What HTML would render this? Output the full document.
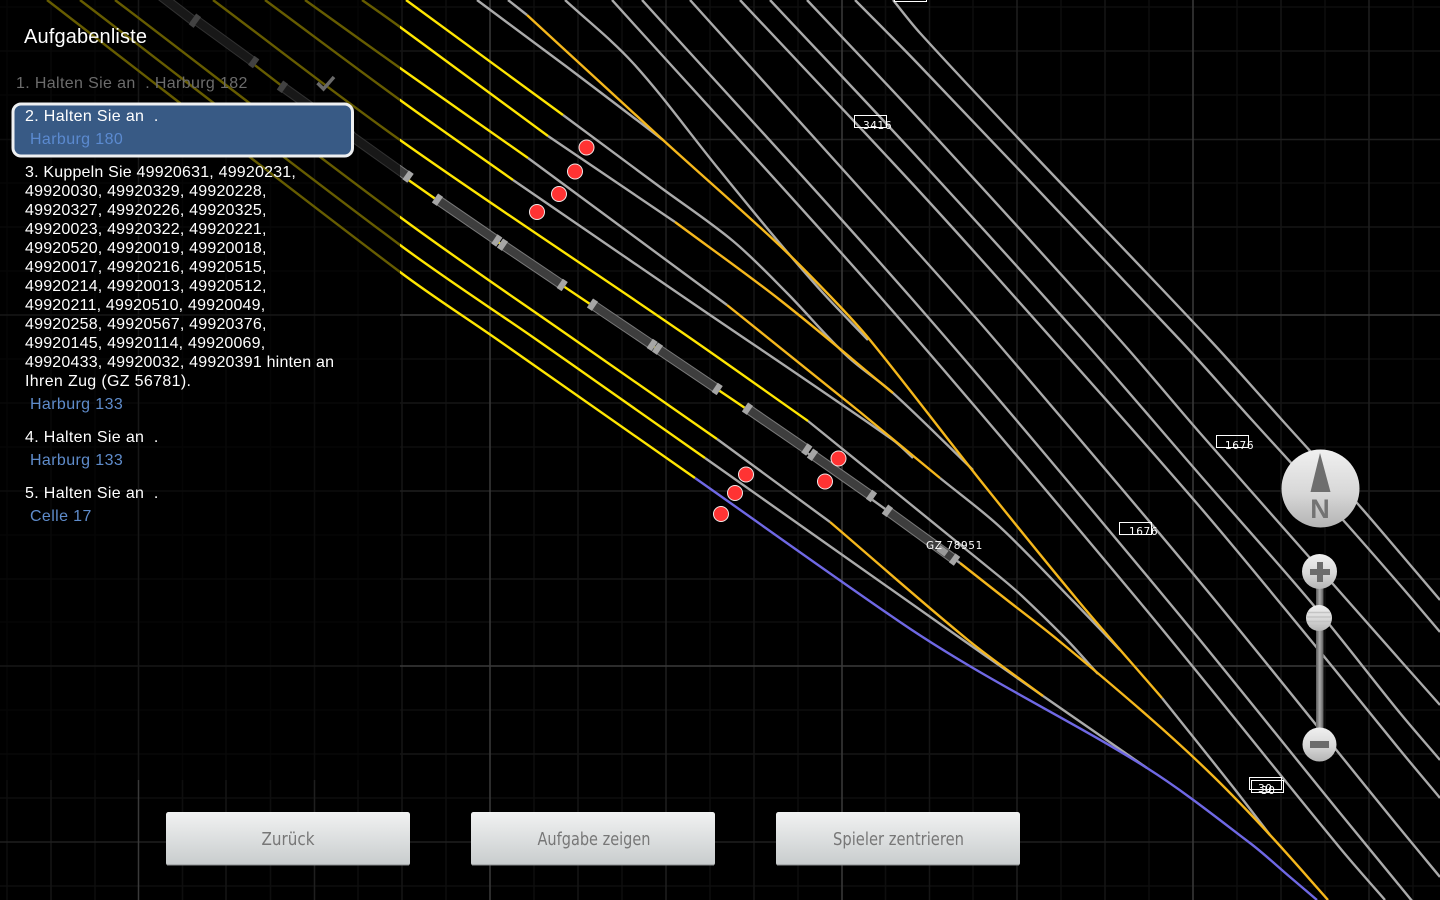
<!DOCTYPE html>
<html lang="de"><head><meta charset="utf-8"><title>Aufgabenliste</title>
<style>
html,body{margin:0;padding:0;background:#000;width:1440px;height:900px;overflow:hidden}
svg{display:block;position:absolute;left:0;top:0}
text{white-space:pre}
.l{font:16px "Liberation Sans",sans-serif;letter-spacing:.2px;fill:#fff}
.h{letter-spacing:.34px}
.b{font:16px "Liberation Sans",sans-serif;letter-spacing:.38px;fill:#5f8ccb}
.m{font:10.5px "DejaVu Sans",sans-serif;letter-spacing:.6px;fill:#fff}
.btn{font:18px "DejaVu Sans","Liberation Sans",sans-serif;fill:#777;text-anchor:middle}
polyline{fill:none;stroke-width:2.4;stroke-linejoin:round}
.g polyline{stroke:#aaa}.y polyline{stroke:#ffe600}.o polyline{stroke:#f5b71c}
</style></head><body>
<svg width="1440" height="900" viewBox="0 0 1440 900" xmlns="http://www.w3.org/2000/svg">
<defs>
<linearGradient id="bt" x1="0" y1="0" x2="0" y2="1"><stop offset="0" stop-color="#f1f2f2"/><stop offset="1" stop-color="#c8cccd"/></linearGradient>
<linearGradient id="cp" x1="0" y1="0" x2="0" y2="1"><stop offset="0" stop-color="#f0f0f0"/><stop offset=".55" stop-color="#d8d8d8"/><stop offset="1" stop-color="#b4b4b4"/></linearGradient>
<linearGradient id="tr" x1="0" y1="0" x2="1" y2="0"><stop offset="0" stop-color="#5a5a5a"/><stop offset=".5" stop-color="#aaa"/><stop offset="1" stop-color="#5a5a5a"/></linearGradient>
<g id="car"><line x1="0" y1="0" x2="78" y2="0" stroke="#7a7a7a" stroke-width="10"/><line x1="0" y1="0" x2="78" y2="0" stroke="#3e3e3e" stroke-width="8"/><rect x="0" y="-5.500" width="6" height="11" fill="#a6a6a6"/><rect x="72" y="-5.500" width="6" height="11" fill="#a6a6a6"/></g>
<g id="car2"><line x1="0" y1="0" x2="89" y2="0" stroke="#7a7a7a" stroke-width="10"/><line x1="0" y1="0" x2="89" y2="0" stroke="#3e3e3e" stroke-width="8"/><rect x="0" y="-5.500" width="6" height="11" fill="#a6a6a6"/><rect x="83" y="-5.500" width="6" height="11" fill="#a6a6a6"/><rect x="66" y="-3.500" width="10" height="7" fill="#999"/></g>
</defs>
<rect width="1440" height="900" fill="#000"/>
<g id="grid" fill="none" stroke-width="1.500">
<g stroke="#0e0e0e">
<path d="M7 0V900M95 0V900M182.500 0V900M270.500 0V900M358 0V900M446 0V900M534 0V900M622 0V900M710 0V900M798 0V900M885.500 0V900M973 0V900M1061 0V900M1149 0V900M1237 0V900M1325 0V900M1413 0V900"/>
<path d="M0 7H1440M0 95H1440M0 183H1440M0 271H1440M0 359H1440M0 447H1440M0 535H1440M0 622H1440M0 710H1440M0 798H1440M0 886H1440"/>
</g>
<g stroke="#151515">
<path d="M51 0V900M226 0V900M402 0V900M578 0V900M754 0V900M929.500 0V900M1105 0V900M1281 0V900"/>
<path d="M0 51H1440M0 227H1440M0 403H1440M0 579H1440M0 754H1440"/>
</g>
<g stroke="#1f1f1f">
<path d="M314.500 0V900M666 0V900M1017 0V900M1369 0V900"/>
<path d="M0 139.500H1440M0 491H1440M0 842H1440"/>
</g>
<g stroke="#3a3a3a">
<path d="M138.500 0V900M490 0V900M842 0V900M1193 0V900"/>
<path d="M0 315H1440M0 666H1440"/>
</g>
</g>
<g class="g">
<polyline points="893,0 920,33 1017,137 1210,340 1282,420 1357,503 1400,553 1440,600"/>
<polyline points="855,0 920,66 1180,340 1252,420 1343,520 1400,585 1440,632"/>
<polyline points="807,0 920,120 1120,340 1200,433 1310,558 1400,660 1440,705"/>
<polyline points="770,0 920,160 1083,340 1200,475 1315,607 1400,713 1440,760"/>
<polyline points="740,0 920,192 1053,340 1200,507 1313,643 1400,750 1440,798"/>
<polyline points="690,0 920,255 995,340 1200,582 1393,820 1440,877"/>
<polyline points="642,0 913,300 1167,600 1340,813 1440,935"/>
<polyline points="612,0 883,300 1138,600 1340,848 1385,900"/>
<polyline points="565,0 633,63 717,167 777,240 823,293 868,340"/>
<polyline points="477,0 567,67 663,140"/>
<polyline points="508,0 527,15"/>
<polyline points="1162,698 1233,787 1270,835"/>
<polyline points="563,115 660,187 733,241 787,293 847,356 893,393 973,470"/>
<polyline points="548,136 675,222"/>
<polyline points="528,158 727,305"/>
<polyline points="940,478 1000,527 1072,600 1120,650"/>
<polyline points="513,180 688,300 893,440 913,458"/>
<polyline points="808,421 1000,577 1022,596 1067,640 1098,674"/>
<polyline points="745,408 960,563"/>
<polyline points="705,458 963,640 1043,696"/>
<polyline points="717,439 830,522"/>
<polyline points="1043,696 1147,768"/>
</g>
<g class="y">
<polyline points="406,0 563,115"/>
<polyline points="362,0 400,27 548,136"/>
<polyline points="305,0 400,68 528,158"/>
<polyline points="265,0 400,100 513,180"/>
<polyline points="213,0 400,140 680,331 808,421"/>
<polyline points="170,0 400,174 745,408"/>
<polyline points="115,0 400,217 575,340 717,439"/>
<polyline points="80,0 400,245 537,340 705,458"/>
<polyline points="47,0 400,272 498,340 695,478"/>
</g>
<g class="o">
<polyline points="527,15 663,140 777,243 830,296 870,340 980,480 1080,603 1162,698"/>
<polyline points="675,222 780,300 893,393"/>
<polyline points="727,305 860,412 940,478"/>
<polyline points="830,522 968,640 1043,696"/>
<polyline points="960,563 1007,600 1058,640 1150,718 1213,776 1270,835 1328,900"/>
</g>
<polyline points="695,478 900,622 973,668 1147,768 1250,843 1290,877 1317,900" stroke="#6f68e4"/>
<g id="trains">
<use href="#car" transform="translate(135,-24) rotate(37.500)"/>
<use href="#car" transform="translate(193,18) rotate(36)"/>
<use href="#car" transform="translate(280,85) rotate(35.500)"/>
<use href="#car" transform="translate(347,133) rotate(35.500)"/>
<use href="#car" transform="translate(435,198) rotate(34.500)"/>
<use href="#car" transform="translate(500,243) rotate(34)"/>
<use href="#car" transform="translate(590,303) rotate(34)"/>
<use href="#car" transform="translate(655,347) rotate(34)"/>
<use href="#car" transform="translate(745,407) rotate(34.500)"/>
<use href="#car" transform="translate(810,453) rotate(35)"/>
<use href="#car2" transform="translate(885,509) rotate(36)"/>
</g>
<rect x="0" y="0" width="400" height="780" fill="#000" fill-opacity=".6"/>
<g fill="#f33" stroke="#f4e8e8" stroke-width="1">
<circle cx="586.500" cy="147.500" r="7.500"/><circle cx="575" cy="171.500" r="7.500"/><circle cx="559" cy="194" r="7.500"/><circle cx="537" cy="212" r="7.500"/>
<circle cx="838.500" cy="458.500" r="7.500"/><circle cx="825" cy="481.500" r="7.500"/><circle cx="746" cy="474.500" r="7.500"/><circle cx="735" cy="493" r="7.500"/><circle cx="721" cy="514" r="7.500"/>
</g>
<g fill="none" stroke="#fff" stroke-width="1">
<rect x="894.500" y="-12" width="32" height="13.500"/>
<rect x="854.500" y="115.500" width="32" height="12"/>
<rect x="1216.500" y="435.500" width="32" height="12"/>
<rect x="1119.500" y="522.500" width="32" height="12"/>
<rect x="1251.500" y="780.500" width="32" height="12"/>
<rect x="1249.500" y="777.500" width="32" height="12"/>
</g>
<text class="m" x="863" y="129">3416</text>
<text class="m" x="1225" y="449">1676</text>
<text class="m" x="1129" y="535">1676</text>
<text class="m" x="1258" y="792">30</text>
<text class="m" x="1261" y="794">30</text>
<text class="m" x="926" y="549">GZ 78951</text>

<text x="24" y="43" font-family="Liberation Sans,sans-serif" font-size="20" letter-spacing=".15" fill="#fff">Aufgabenliste</text>
<text class="l h" x="16" y="88" style="fill:#6c6c6c;letter-spacing:.36px">1. Halten Sie an  . Harburg 182</text>
<path d="M317.500 83l6 6 10.500-12" fill="none" stroke="#6a6a6a" stroke-width="3.500"/>
<rect x="13" y="104" width="339.500" height="52" rx="8" fill="#385a85" stroke="#eef0f2" stroke-width="3"/>
<text class="l h" x="25" y="121">2. Halten Sie an  .</text>
<text class="b" x="30" y="144" style="fill:#5b8ad0">Harburg 180</text>
<text class="l" x="25" y="177">3. Kuppeln Sie 49920631, 49920231,</text>
<text class="l" x="25" y="196">49920030, 49920329, 49920228,</text>
<text class="l" x="25" y="215">49920327, 49920226, 49920325,</text>
<text class="l" x="25" y="234">49920023, 49920322, 49920221,</text>
<text class="l" x="25" y="253">49920520, 49920019, 49920018,</text>
<text class="l" x="25" y="272">49920017, 49920216, 49920515,</text>
<text class="l" x="25" y="291">49920214, 49920013, 49920512,</text>
<text class="l" x="25" y="310">49920211, 49920510, 49920049,</text>
<text class="l" x="25" y="329">49920258, 49920567, 49920376,</text>
<text class="l" x="25" y="348">49920145, 49920114, 49920069,</text>
<text class="l" x="25" y="367">49920433, 49920032, 49920391 hinten an</text>
<text class="l h" x="25" y="386">Ihren Zug (GZ 56781).</text>
<text class="b" x="30" y="409">Harburg 133</text>
<text class="l h" x="25" y="442">4. Halten Sie an  .</text>
<text class="b" x="30" y="465">Harburg 133</text>
<text class="l h" x="25" y="498">5. Halten Sie an  .</text>
<text class="b" x="30" y="521">Celle 17</text>

<rect x="166" y="812" width="244" height="53.500" rx="2.500" fill="url(#bt)"/>
<rect x="471" y="812" width="244" height="53.500" rx="2.500" fill="url(#bt)"/>
<rect x="776" y="812" width="244" height="53.500" rx="2.500" fill="url(#bt)"/>
<g fill="#8a8d8e"><rect x="167" y="864.500" width="242" height="1"/><rect x="472" y="864.500" width="242" height="1"/><rect x="777" y="864.500" width="242" height="1"/></g>
<text class="btn" x="288" y="845" textLength="53" lengthAdjust="spacingAndGlyphs">Zurück</text>
<text class="btn" x="594" y="845" textLength="113" lengthAdjust="spacingAndGlyphs">Aufgabe zeigen</text>
<text class="btn" x="898.500" y="845" textLength="131" lengthAdjust="spacingAndGlyphs">Spieler zentrieren</text>

<circle cx="1320.500" cy="488.500" r="39" fill="url(#cp)"/>
<path d="M1320 453L1330.500 492H1310.500Z" fill="#6e6e6e"/>
<text x="1320" y="518" text-anchor="middle" font-family="Liberation Sans,sans-serif" font-weight="bold" font-size="27" fill="#737373">N</text>
<rect x="1316" y="584" width="7.500" height="148" fill="url(#tr)"/>
<circle cx="1319.500" cy="571.500" r="17.500" fill="url(#cp)"/>
<path d="M1317 562h6v7h7v6h-7v7h-6v-7h-7v-6h7z" fill="#6c6c6c"/>
<circle cx="1319" cy="618" r="13" fill="url(#cp)"/>
<path d="M1308 612.500h22M1307 617h24M1307 621.500h24M1309 626h20" stroke="#c4c4c4" stroke-width="1.500"/>
<circle cx="1319.500" cy="744.500" r="17" fill="url(#cp)"/>
<rect x="1310" y="741" width="19" height="7" fill="#6c6c6c"/>
</svg>
<script>
document.querySelectorAll('polyline').forEach(function(e){
  var n=e.getAttribute('points').trim().split(/\s+/).map(function(s){return s.split(',').map(Number)});
  if(n.length<3)return;
  function tan(i){var a=n[Math.max(i-1,0)],b=n[Math.min(i+1,n.length-1)],x=b[0]-a[0],y=b[1]-a[1],l=Math.hypot(x,y)||1;return[x/l,y/l]}
  var d='M'+n[0][0]+' '+n[0][1];
  for(var i=0;i<n.length-1;i++){
    var p=n[i],q=n[i+1],L=Math.hypot(q[0]-p[0],q[1]-p[1])/3,s=tan(i),t=tan(i+1);
    d+='C'+(p[0]+s[0]*L).toFixed(1)+' '+(p[1]+s[1]*L).toFixed(1)+' '+(q[0]-t[0]*L).toFixed(1)+' '+(q[1]-t[1]*L).toFixed(1)+' '+q[0]+' '+q[1];
  }
  var c=getComputedStyle(e),r=document.createElementNS('http://www.w3.org/2000/svg','path');
  r.setAttribute('d',d);r.setAttribute('fill','none');r.setAttribute('stroke',c.stroke);r.setAttribute('stroke-width','2.4');
  e.parentNode.replaceChild(r,e);
});
</script>
</body></html>
